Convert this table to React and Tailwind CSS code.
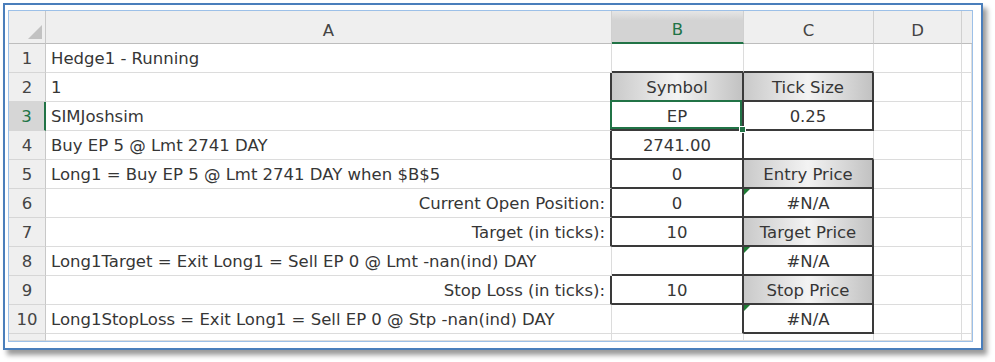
import React from "react";

const COLS = ["A", "B", "C", "D"];

// sheet contents, one object per row
const rows = [
  { A: "Hedge1 - Running" },
  { A: "1", B: "Symbol", C: "Tick Size" },
  { A: "SIMJoshsim", B: "EP", C: "0.25" },
  { A: "Buy EP 5 @ Lmt 2741 DAY", B: "2741.00" },
  { A: "Long1 = Buy EP 5 @ Lmt 2741 DAY when $B$5", B: "0", C: "Entry Price" },
  { A: "Current Open Position:", B: "0", C: "#N/A" },
  { A: "Target  (in ticks):", B: "10", C: "Target Price" },
  { A: "Long1Target = Exit Long1 = Sell EP 0 @ Lmt -nan(ind) DAY", C: "#N/A" },
  { A: "Stop Loss (in ticks):", B: "10", C: "Stop Price" },
  { A: "Long1StopLoss = Exit Long1 = Sell EP 0 @ Stp -nan(ind) DAY", C: "#N/A" },
];

const boxed = new Set(["B2", "C2", "B3", "C3", "B4", "B5", "C5", "B6", "C6", "B7", "C7", "C8", "B9", "C9", "C10"]);
const shaded = new Set(["B2", "C2", "C5", "C7", "C9"]);
const errors = new Set(["C6", "C8", "C10"]);
const rightAligned = new Set(["A6", "A7", "A9"]);
const selected = "B3";

const nextCol = { A: "B", B: "C", C: "D", D: "E", E: "F" };

function Cell({ row, col }) {
  const id = col + row;
  const value = rows[row - 1]?.[col] ?? "";
  const darkRight = boxed.has(id) || boxed.has(nextCol[col] + row);
  const darkBottom = boxed.has(id) || boxed.has(col + (row + 1));

  const align =
    col === "A" ? (rightAligned.has(id) ? "justify-end pr-[5px]" : "justify-start pl-[5px]") : "justify-center";

  return (
    <div
      className={`relative flex items-center pt-[3px] whitespace-nowrap overflow-visible ${align} ${
        darkRight ? "border-r-2 border-r-[#3a3a3a]" : "border-r border-r-[#dcdcdc]"
      } ${darkBottom ? "border-b-2 border-b-[#3a3a3a]" : "border-b border-b-[#dcdcdc]"} ${
        shaded.has(id) ? "bg-[linear-gradient(90deg,#c9c9c9_0%,#f3f3f3_50%,#c2c2c2_100%)]" : "bg-white"
      }`}
    >
      {value}
      {errors.has(id) && (
        <div className="absolute top-0 left-0 w-0 h-0 border-t-[6px] border-t-[#1e7b34] border-r-[6px] border-r-transparent" />
      )}
      {id === selected && (
        <>
          <div className="absolute -left-[2px] -top-[2px] right-0 bottom-0 border-2 border-[#217346] z-10" />
          <div className="absolute -right-[4px] -bottom-[4px] w-[7px] h-[7px] bg-[#217346] border border-white z-20" />
        </>
      )}
    </div>
  );
}

export default function App() {
  const rowNums = Array.from({ length: 11 }, (_, i) => i + 1);

  return (
    <div className="w-[995px] h-[362px] bg-white pl-[3px] pt-[3px]" style={{ fontFamily: '"DejaVu Sans", sans-serif' }}>
      <div className="w-[980px] h-[347px] bg-white border-2 border-[#4a7ebb] pl-[3px] pt-[5px] pr-[8px] pb-[6px] shadow-[4px_5px_5px_rgba(0,0,0,0.4)] flex">
        <div className="flex-1 border border-[#9cc0e8] overflow-hidden">
          <div className="grid grid-cols-[37px_566px_132px_130px_88px_1fr] grid-rows-[33px_repeat(10,29px)_1fr] h-full text-[16.5px] text-[#363636]">
            {/* corner */}
            <div className="bg-[#efefef] border-r border-r-[#c8c8c8] border-b border-b-[#bdbdbd] flex items-end justify-end pr-[3px] pb-[4px]">
              <svg width="14" height="14" viewBox="0 0 14 14">
                <polygon points="14,0 14,14 0,14" fill="#c2c2c2" />
              </svg>
            </div>
            {/* column headers */}
            {COLS.map((c) => (
              <div
                key={c}
                className={`flex items-center justify-center pt-[8px] border-r border-r-[#d0d0d0] ${
                  c === "B"
                    ? "bg-[linear-gradient(180deg,#e6e6e6_0%,#d3d3d3_30%)] text-[#217346] border-b-2 border-b-[#217346]"
                    : "bg-[#efefef] text-[#444] border-b border-b-[#bdbdbd]"
                }`}
              >
                {c}
              </div>
            ))}
            <div className="bg-[#efefef] border-b border-b-[#bdbdbd]" />

            {rowNums.map((r) => (
              <React.Fragment key={r}>
                <div
                  className={`flex items-center justify-center pt-[3px] border-b border-b-[#d6d6d6] ${
                    r === 3
                      ? "bg-[#d6d6d6] text-[#217346] border-r-2 border-r-[#217346]"
                      : "bg-[#efefef] text-[#444] border-r border-r-[#c8c8c8]"
                  }`}
                >
                  {r <= 10 ? r : ""}
                </div>
                {["A", "B", "C", "D", "E"].map((c) => (
                  <Cell key={c} row={r} col={c} />
                ))}
              </React.Fragment>
            ))}
          </div>
        </div>
      </div>
    </div>
  );
}
